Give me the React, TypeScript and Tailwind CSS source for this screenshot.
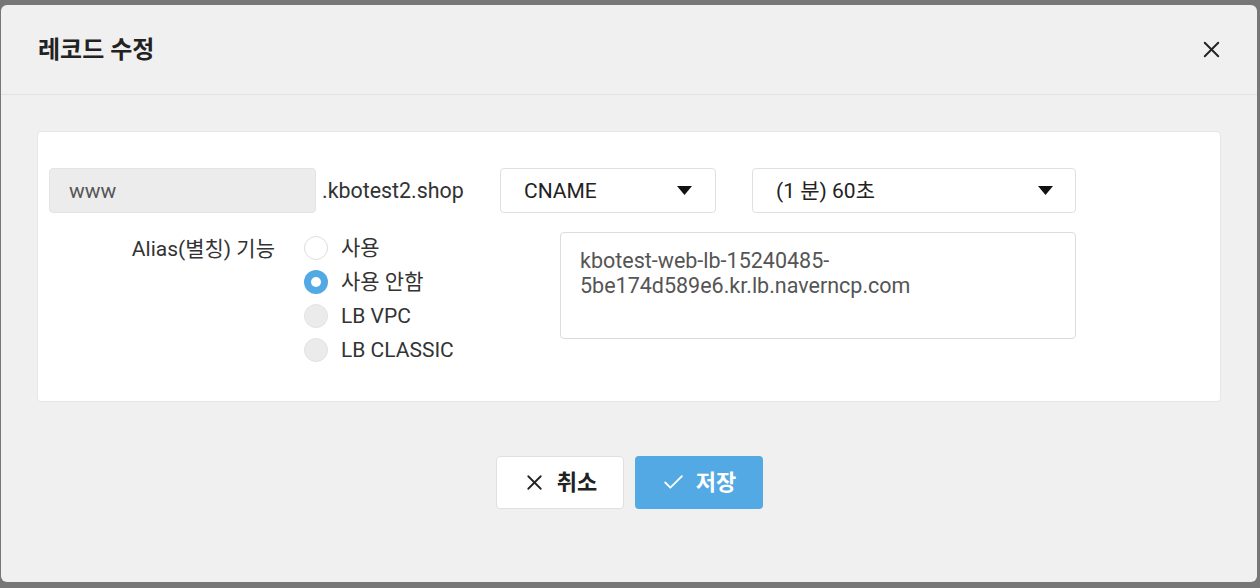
import { X, Check } from "lucide-react";

const font = { fontFamily: 'Roboto, "Noto Sans CJK KR", sans-serif' };

function Caret() {
  return (
    <svg width="15" height="9" viewBox="0 0 15 9" className="shrink-0">
      <path d="M0 0 L15 0 L7.5 9 Z" fill="#111" />
    </svg>
  );
}

function Radio({ label, state }: { label: string; state: "off" | "on" | "disabled" }) {
  return (
    <div className="flex h-[34px] items-center gap-[13px]">
      {state === "on" && (
        <span className="flex h-6 w-6 items-center justify-center rounded-full bg-[#52a9e3]">
          <span className="h-[10px] w-[10px] rounded-full bg-white" />
        </span>
      )}
      {state === "off" && <span className="h-6 w-6 rounded-full border border-[#dddddd] bg-white" />}
      {state === "disabled" && <span className="h-6 w-6 rounded-full border border-[#e2e2e2] bg-[#ebebeb]" />}
      <span className="pt-[2px] text-[21px] text-[#333]">{label}</span>
    </div>
  );
}

export default function App() {
  return (
    <div className="h-[588px] w-[1260px] bg-[#777777] pb-[6px] pl-[1px] pr-[3px] pt-[5px]" style={font}>
      <div className="flex h-full flex-col rounded-md bg-[#f0f0f0]">
        {/* header */}
        <div className="flex h-[90px] items-center justify-between border-b border-[#e2e2e2] pl-[37px] pr-[32px]">
          <h2 className="text-[24px] font-bold text-[#222]">레코드 수정</h2>
          <X size={27} strokeWidth={1.7} className="text-[#222]" />
        </div>

        <div className="px-[36px] pt-[36px]">
          <div className="h-[271px] rounded border border-[#e6e6e6] bg-white pl-[11px] pt-[36px]">
            {/* row 1 */}
            <div className="flex items-center">
              <div className="flex h-[45px] w-[267px] items-center rounded-sm border border-[#e4e4e4] bg-[#ececec] pl-[19px] pt-[2px] text-[21px] text-[#555]">
                www
              </div>
              <span className="ml-[6px] w-[178px] pt-[2px] text-[21.4px] text-[#333]">.kbotest2.shop</span>
              <div className="flex h-[45px] w-[216px] items-center justify-between rounded border border-[#e0e0e0] bg-white pl-[23px] pr-[23px] text-[21px] text-[#222]">
                <span className="pt-[2px]">CNAME</span>
                <Caret />
              </div>
              <div className="ml-[36px] flex h-[45px] w-[324px] items-center justify-between rounded border border-[#e0e0e0] bg-white pl-[23px] pr-[22px] text-[21px] text-[#222]">
                <span className="pt-[2px]">(1 분) 60초</span>
                <Caret />
              </div>
            </div>

            {/* row 2 */}
            <div className="mt-[18px] flex">
              <div className="w-[226px] pt-[4px] text-right text-[21px] leading-[28px] text-[#333]">Alias(별칭) 기능</div>
              <div className="ml-[29px] w-[256px]">
                <Radio label="사용" state="off" />
                <Radio label="사용 안함" state="on" />
                <Radio label="LB VPC" state="disabled" />
                <Radio label="LB CLASSIC" state="disabled" />
              </div>
              <div className="mt-[1px] h-[107px] w-[516px] rounded-sm border border-[#dcdcdc] bg-white pl-[19px] pt-[15px] text-[21.5px] leading-[25px] text-[#555]">
                kbotest-web-lb-15240485-
                <br />
                5be174d589e6.kr.lb.naverncp.com
              </div>
            </div>
          </div>
        </div>

        {/* footer buttons */}
        <div className="mt-[54px] flex justify-center gap-[11px]">
          <button className="flex h-[53px] w-[128px] items-center justify-center gap-[10px] rounded border border-[#e0e0e0] bg-white text-[22px] font-bold text-[#222]">
            <X size={25} strokeWidth={1.7} />
            취소
          </button>
          <button className="flex h-[53px] w-[128px] items-center justify-center gap-[10px] rounded bg-[#52a9e3] text-[22px] font-bold text-white">
            <Check size={25} strokeWidth={1.7} />
            저장
          </button>
        </div>
      </div>
    </div>
  );
}
